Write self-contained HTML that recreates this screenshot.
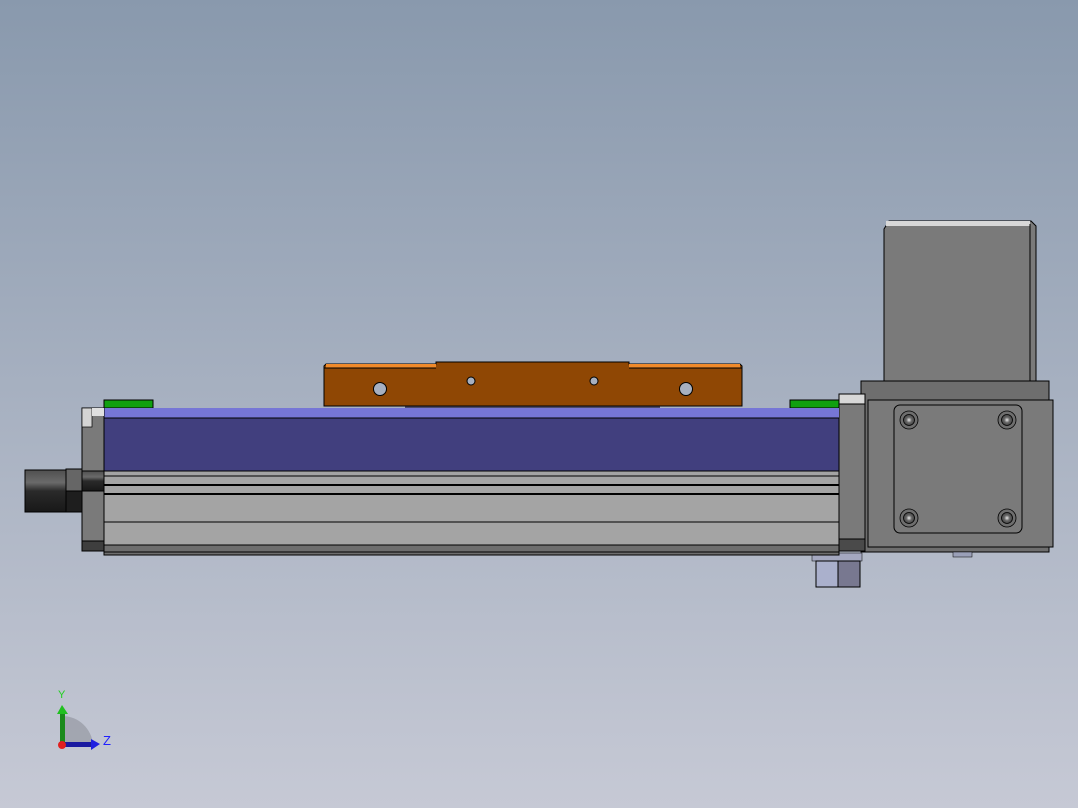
<!DOCTYPE html>
<html><head><style>html,body{margin:0;padding:0;width:1078px;height:808px;overflow:hidden}</style></head><body>
<svg width="1078" height="808" viewBox="0 0 1078 808" xmlns="http://www.w3.org/2000/svg">
<defs>
<linearGradient id="bg" x1="0" y1="0" x2="0" y2="1"><stop offset="0" stop-color="#8999ad"/><stop offset="1" stop-color="#c6c9d5"/></linearGradient>
<linearGradient id="conn" x1="0" y1="0" x2="0" y2="1"><stop offset="0" stop-color="#505050"/><stop offset="0.3" stop-color="#6a6a6a"/><stop offset="0.5" stop-color="#2a2a2a"/><stop offset="1" stop-color="#181818"/></linearGradient>
<radialGradient id="scr"><stop offset="0" stop-color="#e8e8e8"/><stop offset="0.5" stop-color="#666"/><stop offset="1" stop-color="#444"/></radialGradient>
</defs>
<rect width="1078" height="808" fill="url(#bg)"/>
<g stroke="#000" stroke-width="1">
<!-- motor -->
<path d="M884,229 L889,221 L1031,221 L1036,226 L1036,381 L884,381 Z" fill="#7a7a7a"/>
<rect x="886" y="221" width="144" height="5" fill="#d8d8d8" stroke="none"/>
<line x1="1030" y1="224" x2="1030" y2="381"/>
<!-- gearbox -->
<rect x="861" y="381" width="188" height="171" fill="#6e6e6e"/>
<rect x="868" y="400" width="185" height="147" fill="#7a7a7a"/>
<rect x="894" y="405" width="128" height="128" rx="6" fill="#7a7a7a"/>
<rect x="953" y="552" width="19" height="5" fill="#9aa0b8" stroke-width="0.5"/>
<!-- bottom fitting -->
<rect x="812" y="553" width="50" height="8" fill="#a4a8c0" stroke-width="0.5"/>
<rect x="816" y="561" width="22" height="26" fill="#aab0cc"/>
<rect x="838" y="561" width="22" height="26" fill="#787890"/>
<!-- right plate -->
<rect x="839" y="394" width="26" height="157" fill="#7a7a7a"/>
<rect x="839" y="394" width="26" height="10" fill="#d8d8d8"/>
<rect x="839" y="539" width="26" height="12" fill="#4a4a4a"/>
<!-- green blocks -->
<rect x="104" y="400" width="49" height="8" fill="#10a010"/>
<rect x="790" y="400" width="49" height="8" fill="#10a010"/>
<!-- rail -->
<rect x="104" y="408" width="735" height="10" fill="#7676d6" stroke="none"/>
<rect x="104" y="418" width="735" height="53" fill="#413f7e"/>
<rect x="104" y="471" width="735" height="84" fill="#a4a4a4"/>
<line x1="104" y1="476" x2="839" y2="476"/>
<line x1="104" y1="485" x2="839" y2="485" stroke-width="2"/>
<line x1="104" y1="494" x2="839" y2="494" stroke-width="2"/>
<line x1="104" y1="522" x2="839" y2="522"/>
<rect x="104" y="545" width="735" height="10" fill="#6e6e6e"/>
<line x1="104" y1="552" x2="839" y2="552"/>
<!-- left plate -->
<rect x="82" y="408" width="22" height="143" fill="#7a7a7a"/>
<rect x="82" y="408" width="10" height="19" fill="#d4d4d4" stroke-width="0.7"/>
<rect x="92" y="408" width="12" height="8" fill="#e0e0e0" stroke="none"/>
<rect x="82" y="471" width="22" height="20" fill="url(#conn)"/>
<rect x="82" y="541" width="22" height="10" fill="#3e3e3e"/>
<!-- connector -->
<rect x="25" y="470" width="41" height="42" fill="url(#conn)"/>
<rect x="66" y="469" width="16" height="22" fill="#666"/>
<rect x="66" y="491" width="16" height="21" fill="#1e1e1e"/>
<!-- carriage -->
<rect x="405" y="405" width="255" height="3" fill="#4a4a6a" stroke="none"/>
<path d="M324,366 L326,364 L436,364 L436,362 L629,362 L629,364 L740,364 L742,366 L742,406 L324,406 Z" fill="#8f4704"/>
<rect x="326" y="364" width="110" height="4" fill="#f08a2a" stroke="none"/>
<rect x="629" y="364" width="111" height="4" fill="#f08a2a" stroke="none"/>
<line x1="324" y1="368" x2="436" y2="368"/><line x1="629" y1="368" x2="742" y2="368"/>
<g fill="#a7b0c0"><circle cx="380" cy="389" r="6.5"/><circle cx="471" cy="381" r="4"/><circle cx="594" cy="381" r="4"/><circle cx="686" cy="389" r="6.5"/></g>
</g>
<!-- screws -->
<g stroke="#000" stroke-width="0.8">
<g fill="#6e6e6e"><circle cx="909" cy="420" r="9"/><circle cx="1007" cy="420" r="9"/><circle cx="909" cy="518" r="9"/><circle cx="1007" cy="518" r="9"/></g>
<g fill="url(#scr)"><circle cx="909" cy="420" r="5.5"/><circle cx="1007" cy="420" r="5.5"/><circle cx="909" cy="518" r="5.5"/><circle cx="1007" cy="518" r="5.5"/></g>
</g>
<!-- triad -->
<path d="M62,745 L62,716 A31,31 0 0 1 93,745 Z" fill="#9a9ea8" opacity="0.8"/>
<rect x="60" y="712" width="5" height="33" fill="#1a8a1a"/>
<path d="M57,714 L62,705 L68,714 Z" fill="#20c020"/>
<rect x="62" y="742" width="30" height="5" fill="#1a1aa0"/>
<path d="M91,739 L100,744 L91,750 Z" fill="#2020e0"/>
<circle cx="62" cy="745" r="4" fill="#e02020"/>
<text x="58" y="698" font-family="Liberation Sans, sans-serif" font-size="11" fill="#20d020">Y</text>
<text x="103" y="745" font-family="Liberation Sans, sans-serif" font-size="13" fill="#2020ff">Z</text>
</svg>
</body></html>
